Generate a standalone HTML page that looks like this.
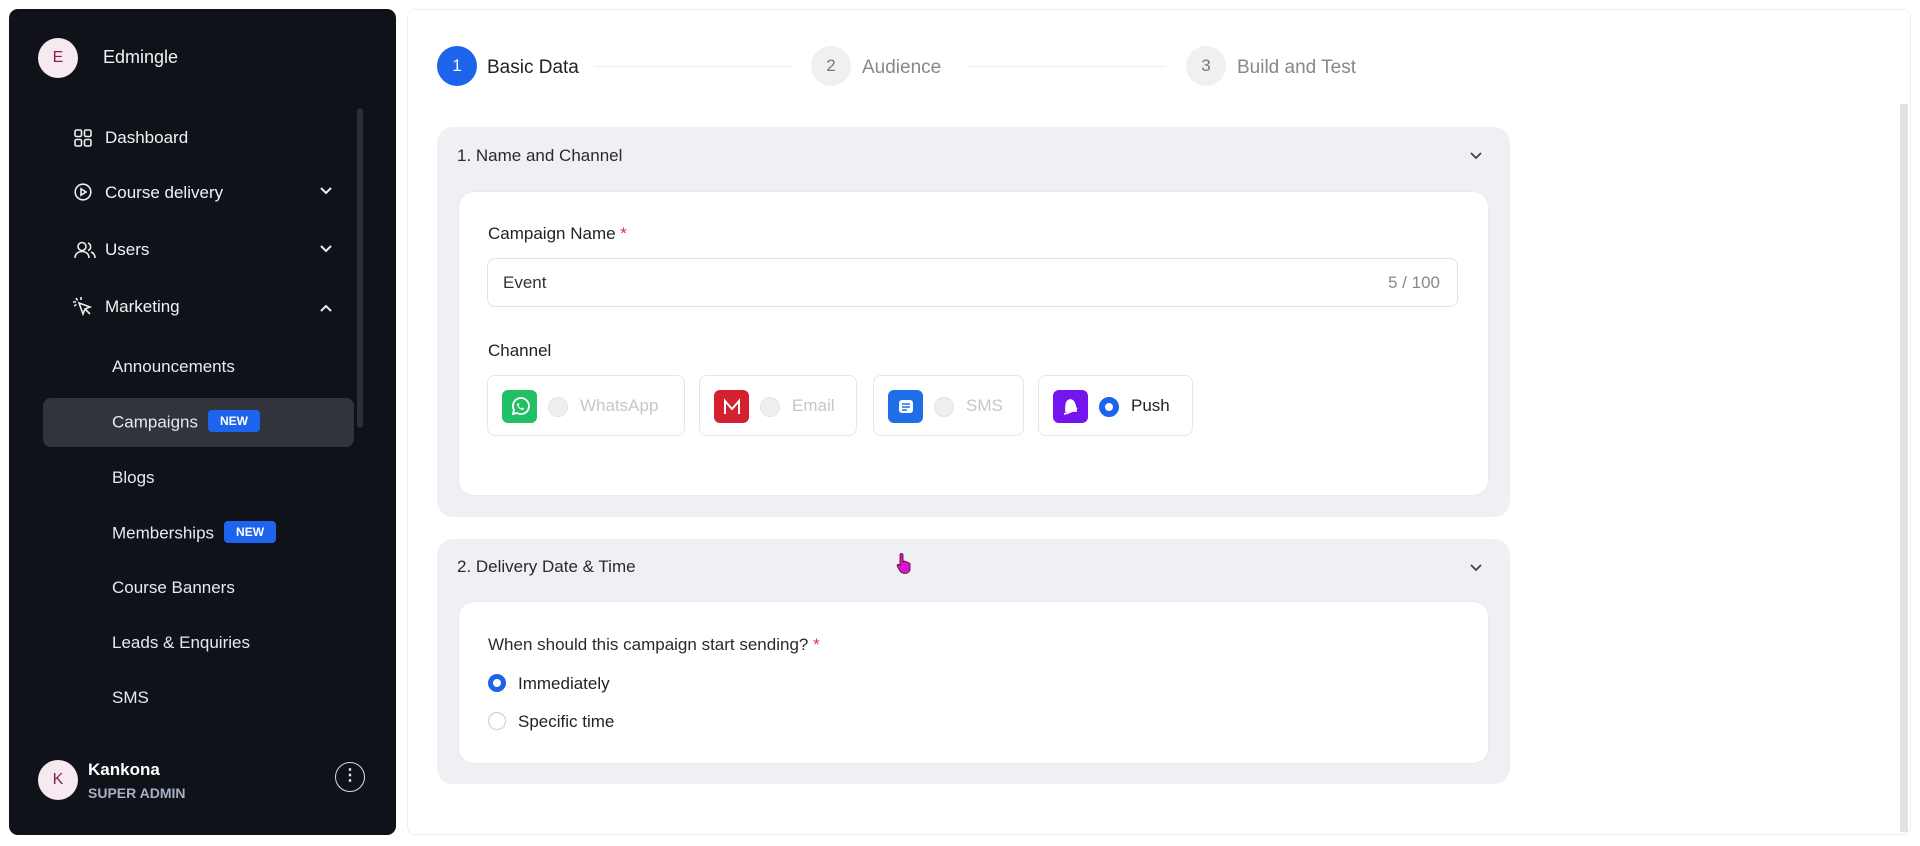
<!DOCTYPE html>
<html><head><meta charset="utf-8"><style>
*{box-sizing:border-box;margin:0;padding:0}
body{width:1920px;height:846px;background:#fff;font-family:"Liberation Sans",sans-serif;position:relative;overflow:hidden;color:#222}
.abs{position:absolute}
#side{left:9px;top:9px;width:387px;height:826px;background:#0f1219;border-radius:9px}
.av{width:40px;height:40px;border-radius:50%;background:#f7e9f0;color:#8a2050;font-size:16px;display:flex;align-items:center;justify-content:center}
.si{color:#f1f2f4;font-size:17px;line-height:20px}
.sub{left:112px;color:#e8e9ec;font-size:17px}
.new{display:inline-block;background:#1d63ed;color:#fff;font-size:12px;font-weight:bold;border-radius:4px;padding:4px 12px;vertical-align:middle;margin-left:10px;position:relative;top:-2px}
#main{left:407px;top:9px;width:1504px;height:826px;border:1px solid #eceef0;border-radius:8px;background:#fff}
.step{width:40px;height:40px;border-radius:50%;display:flex;align-items:center;justify-content:center;font-size:17px}
.st{font-size:19px;top:57px}
.line{height:1px;background:#ececec;top:66px}
.card{left:437px;width:1073px;background:#eff0f3;border-radius:16px}
.inner{background:#fff;border-radius:16px;border:1px solid #e8eaee}
.h{font-size:17px;color:#2a2a2a}
.lbl{font-size:17px;color:#222}
.ch{top:375px;height:61px;border:1px solid #e4e6ea;border-radius:8px;background:#fff}
.ic{position:absolute;left:14px;top:14px;width:35px;height:33px;border-radius:6px;display:flex;align-items:center;justify-content:center}
.rd{position:absolute;top:21px;width:20px;height:20px;border-radius:50%;background:#eceef0;border:1px solid #e2e4e6}
.ct{position:absolute;top:20px;font-size:17px;color:#c5c7ca}
</style></head><body>
<div id="side" class="abs"></div>
<div class="abs av" style="left:38px;top:38px">E</div>
<div class="abs si" style="left:103px;top:47px;font-size:18px">Edmingle</div>
<div class="abs" style="left:357px;top:108px;width:6px;height:320px;border-radius:3px;background:#2c2f36"></div>
<svg class="abs" style="left:74px;top:129px" width="18" height="18" viewBox="0 0 18 18" fill="none" stroke="#eee" stroke-width="1.6"><rect x="1" y="1" width="6.5" height="6.5" rx="1.5"/><rect x="10.5" y="1" width="6.5" height="6.5" rx="1.5"/><rect x="1" y="10.5" width="6.5" height="6.5" rx="1.5"/><rect x="10.5" y="10.5" width="6.5" height="6.5" rx="1.5"/></svg>
<div class="abs si" style="left:105px;top:128px">Dashboard</div>
<svg class="abs" style="left:74px;top:183px" width="18" height="18" viewBox="0 0 18 18" fill="none" stroke="#eee" stroke-width="1.6"><circle cx="9" cy="9" r="7.8"/><path d="M7 5.8v6.4l5-3.2z"/></svg>
<div class="abs si" style="left:105px;top:183px">Course delivery</div>
<svg class="abs" style="left:74px;top:241px" width="22" height="18" viewBox="0 0 22 18" fill="none" stroke="#eee" stroke-width="1.6"><circle cx="8" cy="5.5" r="4"/><path d="M1 17c0-4 3-6.5 7-6.5s7 2.5 7 6.5M14 2a4 4 0 010 7.5M17 11c2.5 1 4 3 4 6"/></svg>
<div class="abs si" style="left:105px;top:240px">Users</div>
<svg class="abs" style="left:72px;top:296px" width="22" height="22" viewBox="0 0 22 22" fill="none" stroke="#eee" stroke-width="1.6"><path d="M7 7l11 4-5 2-2 5z"/><path d="M13 13l5 5M4 2l1.5 2.5M1 6h3M2 10l2.5-1.5M9 1v3"/></svg>
<div class="abs si" style="left:105px;top:297px">Marketing</div>
<svg class="abs" style="left:319px;top:186px" width="14" height="10" viewBox="0 0 14 10" fill="none" stroke="#eee" stroke-width="2"><path d="M2 2l5 5 5-5"/></svg>
<svg class="abs" style="left:319px;top:244px" width="14" height="10" viewBox="0 0 14 10" fill="none" stroke="#eee" stroke-width="2"><path d="M2 2l5 5 5-5"/></svg>
<svg class="abs" style="left:319px;top:303px" width="14" height="10" viewBox="0 0 14 10" fill="none" stroke="#eee" stroke-width="2"><path d="M2 8l5-5 5 5"/></svg>
<div class="abs sub" style="top:357px">Announcements</div>
<div class="abs" style="left:43px;top:398px;width:311px;height:49px;background:#31343c;border-radius:8px"></div>
<div class="abs sub" style="top:412px">Campaigns<span class="new">NEW</span></div>
<div class="abs sub" style="top:468px">Blogs</div>
<div class="abs sub" style="top:523px">Memberships<span class="new">NEW</span></div>
<div class="abs sub" style="top:578px">Course Banners</div>
<div class="abs sub" style="top:633px">Leads &amp; Enquiries</div>
<div class="abs sub" style="top:688px">SMS</div>
<div class="abs av" style="left:38px;top:760px">K</div>
<div class="abs" style="left:88px;top:760px;color:#fff;font-weight:bold;font-size:17px">Kankona</div>
<div class="abs" style="left:88px;top:785px;color:#a7b0c4;font-weight:bold;font-size:14px">SUPER ADMIN</div>
<div class="abs" style="left:335px;top:762px;width:30px;height:30px;border-radius:50%;border:1.5px solid #ddd;color:#eee;text-align:center;font-size:16px;line-height:26px;font-weight:bold">⋮</div>

<div id="main" class="abs"></div>
<div class="abs" style="left:1900px;top:104px;width:8px;height:728px;background:#e2e2e2"></div>
<div class="abs step" style="left:437px;top:46px;background:#1e63ec;color:#fff">1</div>
<div class="abs st" style="left:487px;color:#222">Basic Data</div>
<div class="abs line" style="left:594px;width:198px"></div>
<div class="abs step" style="left:811px;top:46px;background:#f0f0f0;color:#777">2</div>
<div class="abs st" style="left:862px;color:#888">Audience</div>
<div class="abs line" style="left:967px;width:199px"></div>
<div class="abs step" style="left:1186px;top:46px;background:#f0f0f0;color:#777">3</div>
<div class="abs st" style="left:1237px;color:#888">Build and Test</div>

<div class="abs card" style="top:127px;height:390px"></div>
<div class="abs h" style="left:457px;top:146px">1. Name and Channel</div>
<svg class="abs" style="left:1469px;top:151px" width="14" height="10" viewBox="0 0 14 10" fill="none" stroke="#444" stroke-width="1.8"><path d="M2 2l5 5 5-5"/></svg>
<div class="abs inner" style="left:458px;top:191px;width:1031px;height:305px"></div>
<div class="abs lbl" style="left:488px;top:224px">Campaign Name <span style="color:#e0303a">*</span></div>
<div class="abs" style="left:487px;top:258px;width:971px;height:49px;border:1px solid #dfe1e5;border-radius:8px"></div>
<div class="abs" style="left:503px;top:273px;font-size:17px;color:#333">Event</div>
<div class="abs" style="left:1388px;top:273px;font-size:17px;color:#888">5 / 100</div>
<div class="abs lbl" style="left:488px;top:341px">Channel</div>

<div class="abs ch" style="left:487px;width:198px"><div class="ic" style="background:#22c065"><svg width="22" height="22" viewBox="0 0 22 22" fill="none" stroke="#fff" stroke-width="1.8"><path d="M4 18l1-4a8 8 0 113 3z"/><path d="M8 8c0 3 3 6 6 6l1-1.5-2-1-1 1c-1-.5-2-1.5-2.5-2.5l1-1-1-2z" fill="#fff" stroke="none"/></svg></div><div class="rd" style="left:60px"></div><div class="ct" style="left:92px">WhatsApp</div></div>
<div class="abs ch" style="left:699px;width:158px"><div class="ic" style="background:#d3212f"><svg width="20" height="18" viewBox="0 0 20 18" fill="none" stroke="#fff" stroke-width="2"><path d="M3 16V3l7 8 7-8v13"/></svg></div><div class="rd" style="left:60px"></div><div class="ct" style="left:92px">Email</div></div>
<div class="abs ch" style="left:873px;width:151px"><div class="ic" style="background:#1e6ee8"><svg width="16" height="16" viewBox="0 0 16 16"><rect x="1" y="1" width="14" height="13" rx="3" fill="#fff"/><path d="M4 5h8M4 8h8M4 11h5" stroke="#1e6ee8" stroke-width="1.5"/></svg></div><div class="rd" style="left:60px"></div><div class="ct" style="left:92px">SMS</div></div>
<div class="abs ch" style="left:1038px;width:155px"><div class="ic" style="background:#7515ee"><svg width="20" height="22" viewBox="0 0 20 22" fill="none" stroke="#fff" stroke-width="1.8"><path d="M5 15c0-6 0-10 4-11 4 0 5 4 6 11z" fill="#fff"/><path d="M3 18c4-1 9-3 13-6" /></svg></div><div class="rd" style="left:60px;background:#fff;border:6px solid #1e63ec"></div><div class="ct" style="left:92px;color:#222">Push</div></div>

<div class="abs card" style="top:539px;height:245px"></div>
<div class="abs h" style="left:457px;top:557px">2. Delivery Date &amp; Time</div>
<svg class="abs" style="left:1469px;top:563px" width="14" height="10" viewBox="0 0 14 10" fill="none" stroke="#444" stroke-width="1.8"><path d="M2 2l5 5 5-5"/></svg>
<div class="abs inner" style="left:458px;top:601px;width:1031px;height:163px"></div>
<div class="abs lbl" style="left:488px;top:635px;color:#2a2a2a">When should this campaign start sending? <span style="color:#e0303a">*</span></div>
<div class="abs" style="left:488px;top:674px;width:18px;height:18px;border-radius:50%;background:#fff;border:5.5px solid #1e63ec"></div>
<div class="abs" style="left:518px;top:674px;font-size:17px;color:#222">Immediately</div>
<div class="abs" style="left:488px;top:712px;width:18px;height:18px;border-radius:50%;background:#fff;border:1px solid #ccc"></div>
<div class="abs" style="left:518px;top:712px;font-size:17px;color:#222">Specific time</div>
<svg class="abs" style="left:896px;top:553px" width="16" height="22" viewBox="0 0 16 22"><path d="M4 2a1.5 1.5 0 013 0v7l1-1 2 .5 2 1 2 1v6c0 2-2 4-5 4s-5-2-6-4l-2-4c0-1 1-1.5 2-1l1 1z" fill="#d018d8" stroke="#600" stroke-width=".8"/></svg>
</body></html>
